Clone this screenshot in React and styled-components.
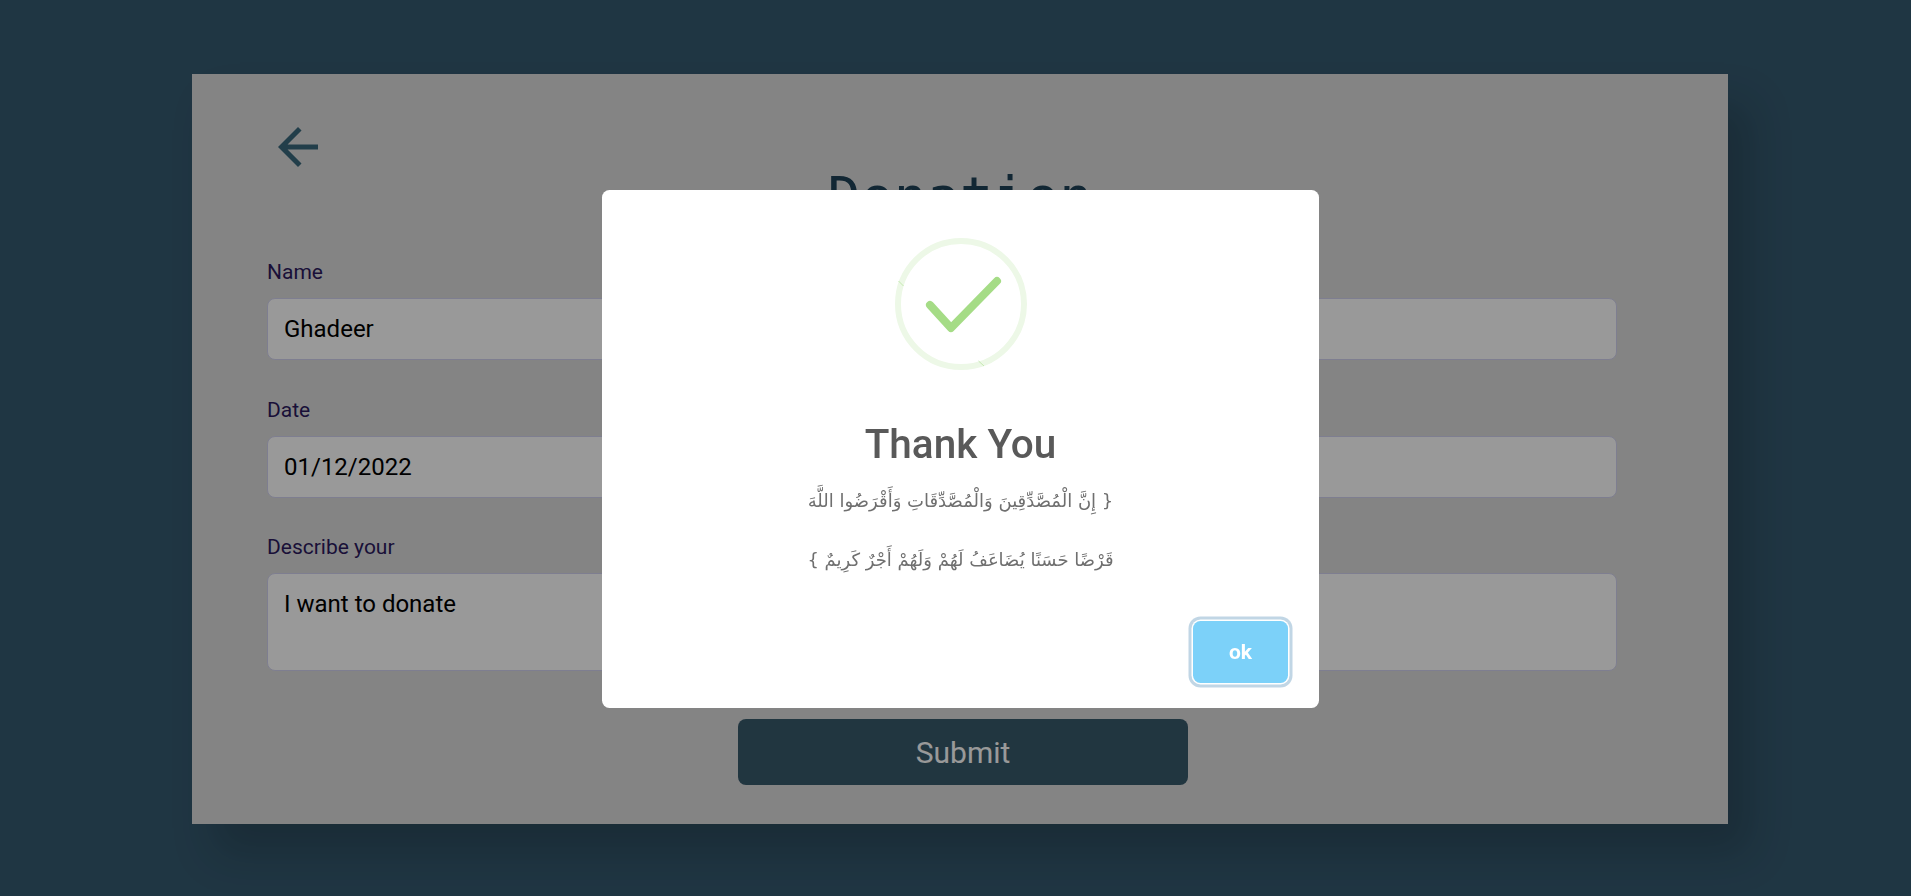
import React from 'react';
import styled, { createGlobalStyle } from 'styled-components';
import { MdArrowBack } from 'react-icons/md';

const GlobalStyle = createGlobalStyle`
    html, body {
        margin: 0;
        padding: 0;
        height: 100%;
        overflow: hidden;
        background: #355a70;
        font-family: Roboto, "Liberation Sans", sans-serif;
    }
    * {
        box-sizing: border-box;
    }
`;

const Page = styled.div`
    height: 896px;
    padding: 74px 183px 0 192px;
`;

const Card = styled.div`
    height: 750px;
    padding: 43px 111px 0 75px;
    background: #dddddd;
    box-shadow: 22px 30px 40px rgba(0, 0, 0, 0.18);
    display: flex;
    flex-direction: column;
`;

const BackButton = styled.button`
    width: 60px;
    height: 60px;
    margin-left: 1px;
    padding: 0;
    border: none;
    background: transparent;
    color: #3a687c;
    display: flex;
`;

const Title = styled.h1`
    height: 90px;
    margin: -7px 0 0;
    padding-left: 36px;
    font-family: "DejaVu Sans Mono", "Liberation Mono", monospace;
    font-size: 55px;
    font-weight: 400;
    line-height: 54px;
    text-align: center;
    color: #1f4257;
`;

const Form = styled.form`
    display: flex;
    flex-direction: column;
    gap: 37.5px;
`;

const Field = styled.div`
    display: flex;
    flex-direction: column;
    gap: 14px;
`;

const Label = styled.label`
    font-size: 21px;
    line-height: 24px;
    color: #2c1a5e;
`;

const Input = styled.input`
    height: 62px;
    padding: 0 16px;
    border: 1px solid #d3d3f0;
    border-radius: 8px;
    background: #ffffff;
    font-family: inherit;
    font-size: 24px;
    color: #000000;
    outline: none;
`;

const TextArea = styled.textarea`
    height: 98px;
    padding: 16px 16px 0;
    border: 1px solid #d3d3f0;
    border-radius: 8px;
    background: #ffffff;
    font-family: inherit;
    font-size: 24px;
    line-height: 28px;
    color: #000000;
    outline: none;
    resize: none;
`;

const SubmitButton = styled.button`
    width: 450px;
    height: 66px;
    margin: 48px 0 0 471px;
    border: none;
    border-radius: 8px;
    background: #385a6c;
    font-family: inherit;
    font-size: 30px;
    color: #ffffff;
`;

const Overlay = styled.div`
    position: fixed;
    inset: 0;
    padding: 2px 0 0 10px;
    background: rgba(0, 0, 0, 0.4);
    display: flex;
    align-items: center;
    justify-content: center;
`;

const Modal = styled.div`
    width: 717px;
    height: 518px;
    padding-top: 48px;
    border-radius: 7.5px;
    background: #ffffff;
    display: flex;
    flex-direction: column;
    align-items: center;
`;

const SuccessIcon = styled.svg`
    width: 132px;
    height: 132px;
    flex-shrink: 0;
`;

const ModalTitle = styled.h2`
    margin: 50px 0 0;
    font-size: 40.5px;
    font-weight: 500;
    line-height: 48px;
    color: #595959;
`;

const Verse = styled.p`
    margin: 3px 0 0;
    font-family: "DejaVu Sans", sans-serif;
    font-size: 18px;
    line-height: 59px;
    text-align: center;
    color: #6f6f6f;
`;

const ModalFooter = styled.div`
    align-self: stretch;
    margin-top: auto;
    padding: 0 31px 25px 0;
    display: flex;
    justify-content: flex-end;
`;

const OkButton = styled.button`
    width: 95px;
    height: 62px;
    border: none;
    border-radius: 7.5px;
    background: #7cd1f9;
    box-shadow: 0 0 0 1.5px #ffffff, 0 0 0 4.5px rgba(43, 114, 165, 0.29);
    font-family: inherit;
    font-size: 21px;
    font-weight: 700;
    color: #ffffff;
`;

const App = () => {
  return (
    <>
      <GlobalStyle />
      <Page>
        <Card>
          <BackButton type="button">
            <MdArrowBack size={60} />
          </BackButton>
          <Title>Donation</Title>
          <Form>
            <Field>
              <Label>Name</Label>
              <Input type="text" value="Ghadeer" readOnly />
            </Field>
            <Field>
              <Label>Date</Label>
              <Input type="text" value="01/12/2022" readOnly />
            </Field>
            <Field>
              <Label>Describe your</Label>
              <TextArea value="I want to donate" readOnly />
            </Field>
          </Form>
          <SubmitButton type="button">Submit</SubmitButton>
        </Card>
      </Page>
      <Overlay>
        <Modal>
          <SuccessIcon viewBox="0 0 132 132">
            <circle cx="66" cy="66" r="63" fill="none" stroke="#edf8e7" strokeWidth="6" />
            <path d="M3.500 43l5 5M83.500 123l5.500 5" stroke="#c4e9b0" strokeWidth="1" />
            <path d="M35 67l21 23 46-47" fill="none" stroke="#a5dc86" strokeWidth="8" strokeLinecap="round" strokeLinejoin="round" />
          </SuccessIcon>
          <ModalTitle>Thank You</ModalTitle>
          <Verse dir="rtl">
            {'{ إِنَّ الْمُصَّدِّقِينَ وَالْمُصَّدِّقَاتِ وَأَقْرَضُوا اللَّهَ'}
            <br />
            {'قَرْضًا حَسَنًا يُضَاعَفُ لَهُمْ وَلَهُمْ أَجْرٌ كَرِيمٌ }'}
          </Verse>
          <ModalFooter>
            <OkButton type="button">ok</OkButton>
          </ModalFooter>
        </Modal>
      </Overlay>
    </>
  );
};

export default App;
